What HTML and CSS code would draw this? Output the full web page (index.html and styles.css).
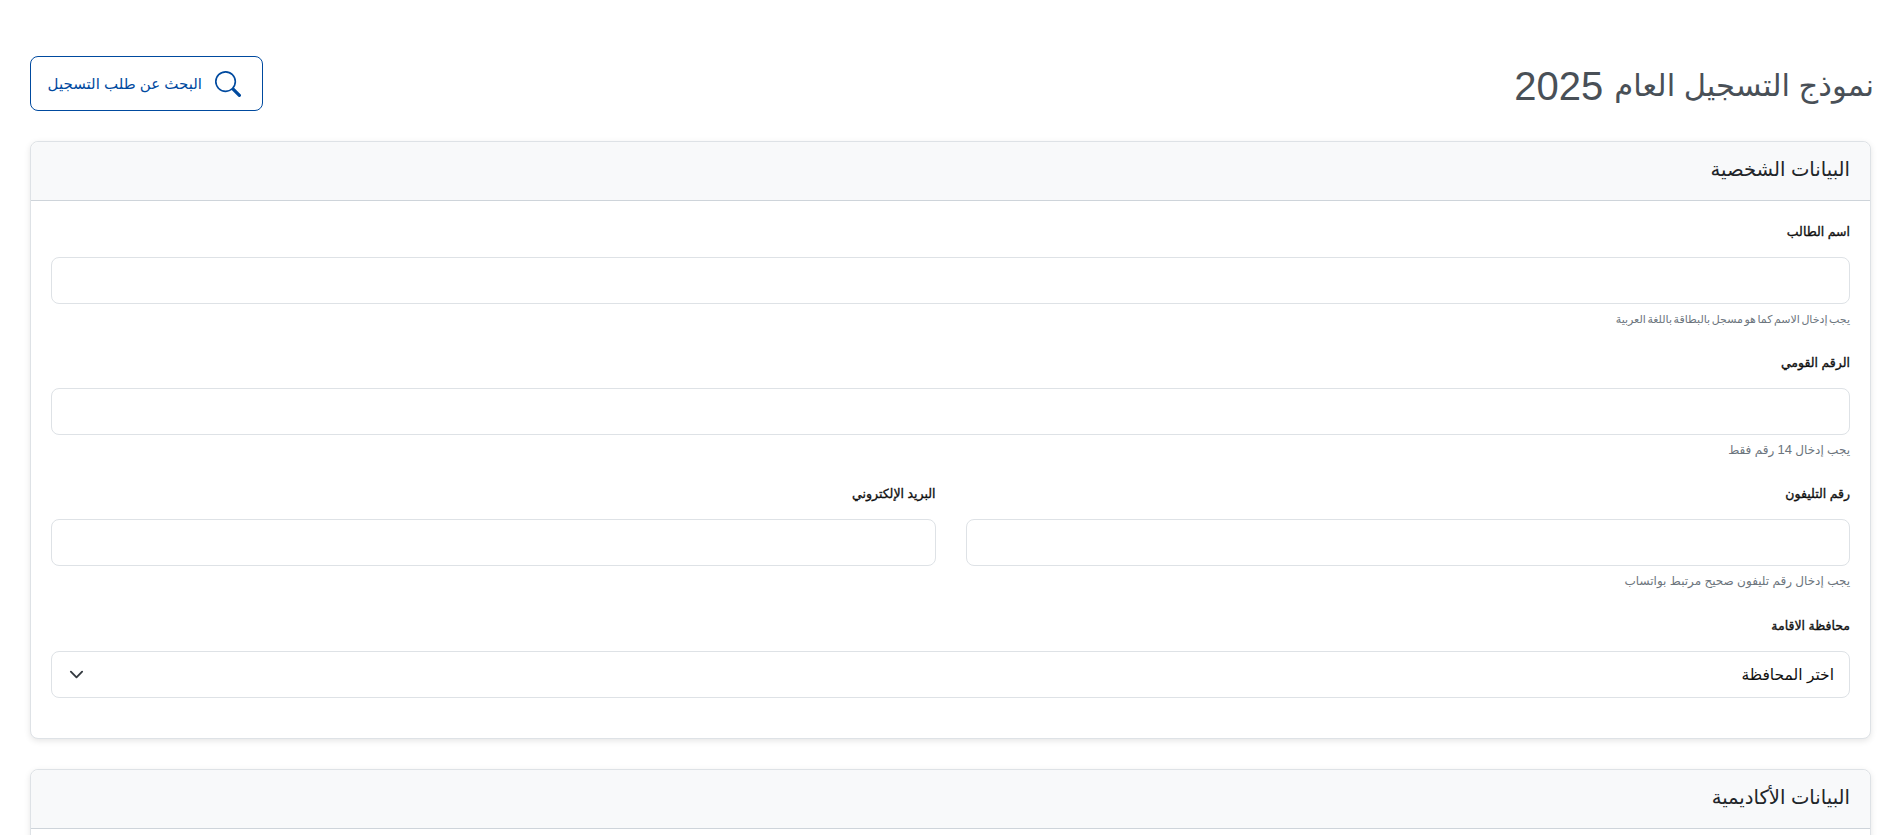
FILE: index.html
```html
<!DOCTYPE html>
<html lang="ar" dir="rtl">
<head>
    <meta charset="UTF-8">
    <meta name="viewport" content="width=device-width, initial-scale=1.0">
    <title>نموذج التسجيل العام 2025</title>
    <link rel="stylesheet" href="styles.css">
</head>
<body>
    <div class="page-header">
        <h1><span class="title-text">نموذج التسجيل العام</span> 2025</h1>
        <a class="search-btn" href="#">
            <svg width="26" height="26" viewBox="0 0 16 16" fill="currentColor">
                <path d="M11.742 10.344a6.5 6.5 0 1 0-1.397 1.398h-.001q.044.06.098.115l3.85 3.85a1 1 0 0 0 1.415-1.414l-3.85-3.85a1 1 0 0 0-.115-.1zM12 6.5a5.5 5.5 0 1 1-11 0 5.5 5.5 0 0 1 11 0"/>
            </svg>
            <span>البحث عن طلب التسجيل</span>
        </a>
    </div>

    <section class="card">
        <div class="card-header">البيانات الشخصية</div>
        <div class="card-body">
            <div class="form-group">
                <label for="name">اسم الطالب</label>
                <input type="text" id="name">
                <small class="hint-long">يجب إدخال الاسم كما هو مسجل بالبطاقة باللغة العربية</small>
            </div>
            <div class="form-group">
                <label for="nationalId">الرقم القومي</label>
                <input type="text" id="nationalId">
                <small>يجب إدخال <span class="digits">14</span> رقم فقط</small>
            </div>
            <div class="form-row">
                <div class="form-group">
                    <label for="phone">رقم التليفون</label>
                    <input type="text" id="phone">
                    <small>يجب إدخال رقم تليفون صحيح مرتبط بواتساب</small>
                </div>
                <div class="form-group">
                    <label for="email">البريد الإلكتروني</label>
                    <input type="email" id="email">
                </div>
            </div>
            <div class="form-group">
                <label for="governorate">محافظة الاقامة</label>
                <div class="select-box" id="governorate">
                    <span>اختر المحافظة</span>
                    <svg width="15" height="15" viewBox="0 0 16 16" fill="none" stroke="#343a40" stroke-width="2" stroke-linecap="round" stroke-linejoin="round">
                        <path d="m2 5 6 6 6-6"/>
                    </svg>
                </div>
            </div>
        </div>
    </section>

    <section class="card">
        <div class="card-header">البيانات الأكاديمية</div>
        <div class="card-body"></div>
    </section>
</body>
</html>
```

FILE: styles.css
```css
html {
    height: 835px;
    overflow: hidden;
}
body {
    font-family: Arial, "Liberation Sans", "DejaVu Sans", sans-serif;
    margin: 0;
    padding: 56px 6px 0 30px;
    height: 835px;
    box-sizing: border-box;
    overflow: hidden;
    background-color: #fff;
    color: #212529;
}
.page-header {
    display: flex;
    justify-content: space-between;
    align-items: center;
    margin-bottom: 30px;
}
h1 {
    margin: 0 -3px 0 0;
    padding-top: 4px;
    font-size: 40px;
    line-height: 46px;
    font-weight: 400;
    color: #495057;
}
.title-text {
    font-size: 30.6px;
    vertical-align: 4px;
}
.search-btn {
    display: flex;
    align-items: center;
    gap: 13px;
    width: 233px;
    height: 55px;
    box-sizing: border-box;
    padding: 0 21px 0 10px;
    border: 1px solid #004a9f;
    border-radius: 8px;
    color: #004a9f;
    font-size: 15px;
    white-space: nowrap;
    text-decoration: none;
}
.card {
    border: 1px solid #dee2e6;
    border-radius: 8px;
    box-shadow: 0 2px 6px rgba(0, 0, 0, 0.1);
    margin-bottom: 30px;
    background-color: #fff;
}
.card-header {
    height: 59px;
    box-sizing: border-box;
    padding: 0 20px 4px;
    display: flex;
    align-items: center;
    background-color: #f8f9fa;
    border-bottom: 1px solid #ced4da;
    border-radius: 8px 8px 0 0;
    font-size: 19.6px;
}
.card-body {
    padding: 20px;
}
.form-group {
    margin-bottom: 25px;
}
.form-row {
    display: grid;
    grid-template-columns: 1fr 1fr;
    gap: 30px;
}
.form-row .form-group {
    min-width: 0;
    margin-bottom: 26px;
}
label {
    display: block;
    height: 21px;
    line-height: 23px;
    margin-bottom: 15px;
    font-size: 12.5px;
    color: #111;
    -webkit-text-stroke: 0.35px #111;
}
input,
.select-box {
    display: block;
    width: 100%;
    height: 47px;
    box-sizing: border-box;
    border: 1px solid #dee2e6;
    border-radius: 8px;
    background-color: #fff;
}
small {
    display: block;
    margin-top: 5px;
    height: 18px;
    line-height: 20px;
    font-size: 12px;
    color: #6c757d;
}
.hint-long {
    font-size: 11px;
    word-spacing: -1.5px;
}
.digits {
    font-size: 13px;
}
.select-box {
    display: flex;
    align-items: center;
    justify-content: space-between;
    padding: 0 15px;
    font-size: 15.5px;
    color: #111;
}
.select-box svg {
    margin-left: 2px;
}
.card-body > .form-group:last-child {
    margin-bottom: 20px;
}
```
